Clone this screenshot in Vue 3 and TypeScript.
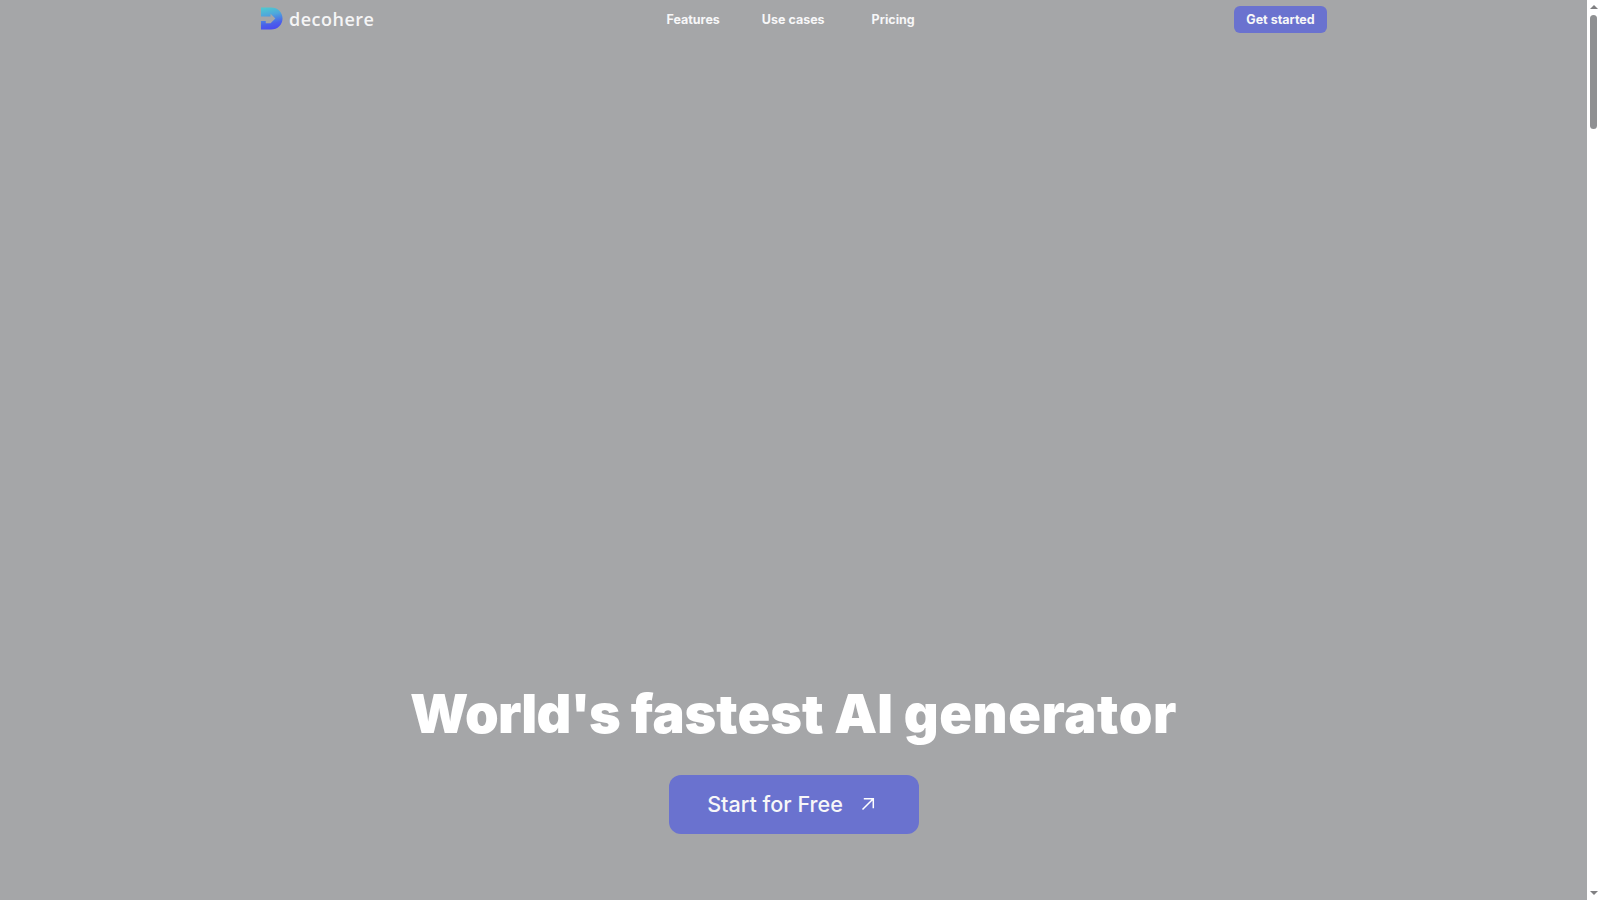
<script setup lang="ts">
const links: string[] = ['Features', 'Use cases', 'Pricing']
</script>

<template>
  <div class="window">
    <div class="page">
      <header class="bar">
        <a class="brand">
          <svg class="mark" viewBox="0 0 24 24" width="23" height="23" aria-hidden="true">
            <defs>
              <linearGradient id="lg" x1="0.25" y1="0" x2="0.45" y2="1">
                <stop offset="0" stop-color="#4fc8d0" />
                <stop offset="0.35" stop-color="#4fa6dc" />
                <stop offset="0.75" stop-color="#4a60ea" />
                <stop offset="1" stop-color="#4a4cf0" />
              </linearGradient>
            </defs>
            <path fill="url(#lg)" d="M1 0.5H11.5C18.5 0.5 23.5 5.5 23.5 12C23.5 18.5 18.5 23.5 11.5 23.5H1V14.5H6V17H11L16 12L11 7V10H1Z" />
          </svg>
          <span class="word">decohere</span>
        </a>
        <nav class="nav">
          <a v-for="l in links" :key="l" class="link">{{ l }}</a>
        </nav>
        <button class="cta" type="button">Get started</button>
      </header>
      <section class="hero">
        <h1 class="title"><span class="tight">World's</span> fastest AI <span class="loose">generator</span></h1>
        <button class="start" type="button">
          <span class="start-label">Start for Free</span>
          <svg class="start-icon" viewBox="0 0 16 16" width="16" height="16" fill="none" stroke="#fff" stroke-width="1.5" aria-hidden="true">
            <path d="M2.5 13.5L13.3 2.7M3.8 2.7H13.3V12.2" />
          </svg>
        </button>
      </section>
    </div>
    <aside class="scroll" aria-hidden="true">
      <span class="arrow up"></span>
      <span class="thumb"></span>
      <span class="arrow down"></span>
    </aside>
  </div>
</template>

<style>
html, body { margin: 0; overflow: hidden; }
</style>

<style scoped>
.window {
  display: flex;
  width: 1600px;
  height: 900px;
  overflow: hidden;
  font-family: Inter, "Liberation Sans", sans-serif;
}
.page {
  flex: 1;
  min-width: 0;
  background: #a5a6a8;
  display: flex;
  flex-direction: column;
  align-items: center;
}
.bar {
  width: 1067px;
  height: 40px;
  display: flex;
  align-items: center;
  flex-shrink: 0;
}
.brand {
  display: flex;
  align-items: center;
  gap: 6px;
  margin-top: -3px;
}
.mark { display: block; }
.word {
  font-family: "Open Sans", sans-serif;
  font-weight: 600;
  font-size: 18px;
  letter-spacing: 0.5px;
  color: #f5f5f6;
}
.nav {
  display: flex;
  margin-left: 292px;
}
.link {
  font-size: 12.5px;
  font-weight: 700;
  color: #f7f7f8;
  margin-top: -1px;
}
.link:nth-child(2) { margin-left: 42px; }
.link:nth-child(3) { margin-left: 47px; }
.cta {
  margin-left: auto;
  margin-top: -1px;
  width: 93px;
  height: 27px;
  padding: 0;
  border: 0;
  border-radius: 6px;
  background: #6a72cf;
  color: #f7f7f8;
  font: 700 12.5px Inter, sans-serif;
}
.hero {
  flex: 1;
  display: flex;
  flex-direction: column;
  align-items: center;
  padding-top: 640px;
}
.title {
  margin: 0;
  font-size: 54px;
  font-weight: 900;
  line-height: 68px;
  color: #fff;
  white-space: nowrap;
}
.tight { letter-spacing: -0.8px; }
.loose { letter-spacing: 0.6px; }
.start {
  margin: 27px 0 0 1px;
  width: 250px;
  height: 59px;
  padding: 0 5px 0 0;
  border: 0;
  border-radius: 12px;
  background: #6a72cf;
  color: #f7f7f8;
  font: 500 21.6px Inter, sans-serif;
  display: flex;
  align-items: center;
  justify-content: center;
  gap: 17px;
}
.start-label { margin-top: -2px; }
.start-icon { margin-top: -2px; }
.scroll {
  width: 13px;
  flex-shrink: 0;
  background: #fff;
  display: flex;
  flex-direction: column;
  align-items: center;
}
.thumb {
  width: 7px;
  height: 114px;
  border-radius: 4px;
  background: #8f9092;
  margin-top: 6px;
}
.arrow {
  width: 0;
  height: 0;
  border-left: 4px solid transparent;
  border-right: 4px solid transparent;
}
.up {
  margin-top: 5px;
  border-bottom: 4px solid #808082;
}
.down {
  margin-top: auto;
  margin-bottom: 5px;
  border-top: 4px solid #808082;
}
</style>
